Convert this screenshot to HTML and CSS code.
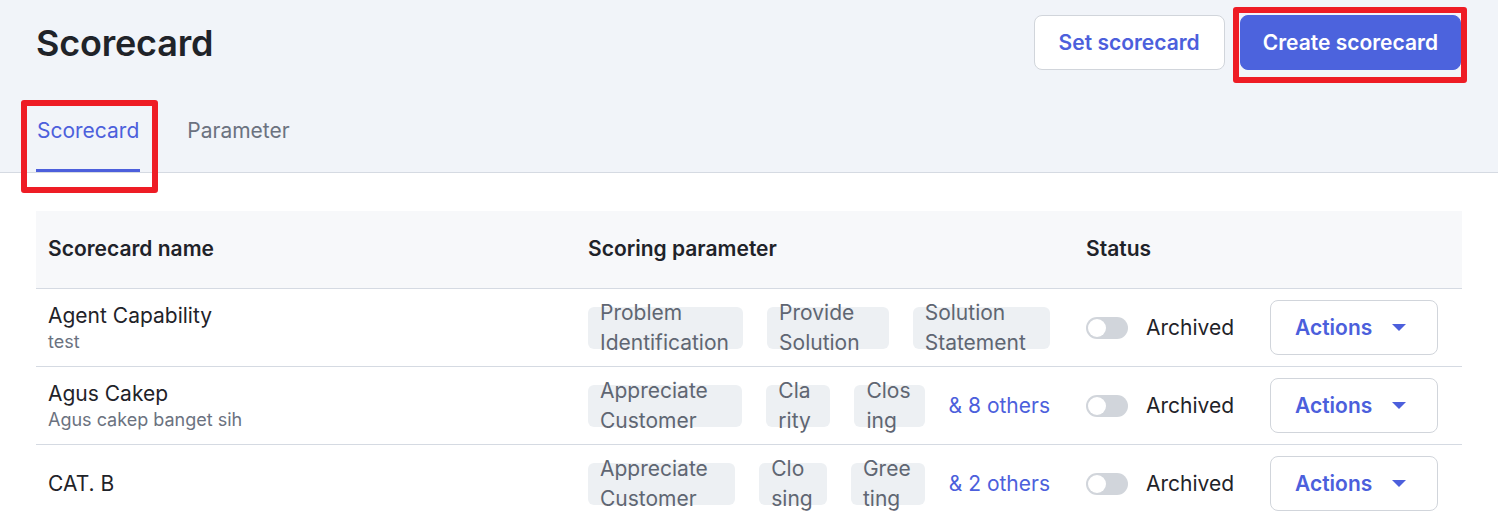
FILE: index.html
```html
<!DOCTYPE html>
<html lang="en">
<head>
<meta charset="utf-8">
<title>Scorecard</title>
<link rel="stylesheet" href="styles.css">
</head>
<body>
<header class="page-head">
  <div class="top-row">
    <h1 class="title">Scorecard</h1>
    <div class="head-actions">
      <button class="btn btn-outline">Set scorecard</button>
      <button class="btn btn-primary">Create scorecard<span class="mark mark-create"></span></button>
    </div>
  </div>
  <nav class="tabs">
    <div class="tab tab-active">Scorecard<span class="mark mark-tab"></span></div>
    <div class="tab">Parameter</div>
  </nav>
</header>

<main class="content">
  <div class="table">
    <div class="row row-head">
      <div class="cell">Scorecard name</div>
      <div class="cell cell-param">Scoring parameter</div>
      <div class="cell">Status</div>
      <div class="cell"></div>
    </div>

    <div class="row">
      <div class="cell cell-name">
        <div class="name">Agent Capability</div>
        <div class="desc">test</div>
      </div>
      <div class="cell cell-param">
        <div class="chips">
          <span class="chip">Problem Identification</span>
          <span class="chip">Provide Solution</span>
          <span class="chip">Solution Statement</span>
        </div>
      </div>
      <div class="cell cell-status">
        <span class="toggle"><span class="knob"></span></span>
        <span class="status-label">Archived</span>
      </div>
      <div class="cell cell-actions">
        <button class="btn-actions">Actions<span class="caret"></span></button>
      </div>
    </div>

    <div class="row">
      <div class="cell cell-name">
        <div class="name">Agus Cakep</div>
        <div class="desc">Agus cakep banget sih</div>
      </div>
      <div class="cell cell-param">
        <div class="chips">
          <span class="chip">Appreciate Customer</span>
          <span class="chip">Clarity</span>
          <span class="chip">Closing</span>
          <span class="more">&amp; 8 others</span>
        </div>
      </div>
      <div class="cell cell-status">
        <span class="toggle"><span class="knob"></span></span>
        <span class="status-label">Archived</span>
      </div>
      <div class="cell cell-actions">
        <button class="btn-actions">Actions<span class="caret"></span></button>
      </div>
    </div>

    <div class="row">
      <div class="cell cell-name">
        <div class="name">CAT. B</div>
      </div>
      <div class="cell cell-param">
        <div class="chips">
          <span class="chip">Appreciate Customer</span>
          <span class="chip">Closing</span>
          <span class="chip">Greeting</span>
          <span class="more">&amp; 2 others</span>
        </div>
      </div>
      <div class="cell cell-status">
        <span class="toggle"><span class="knob"></span></span>
        <span class="status-label">Archived</span>
      </div>
      <div class="cell cell-actions">
        <button class="btn-actions">Actions<span class="caret"></span></button>
      </div>
    </div>
  </div>
</main>
</body>
</html>
```

FILE: styles.css
```css
* { box-sizing: border-box; }

html, body {
  margin: 0;
  padding: 0;
  background: #ffffff;
  font-family: Inter, "Noto Sans", "Liberation Sans", sans-serif;
  color: #1f2937;
  overflow: hidden;
}

.page-head {
  background: #f1f4f9;
  border-bottom: 1px solid #d5dae2;
  padding: 0 36px;
}

.top-row {
  display: flex;
  justify-content: space-between;
  align-items: flex-start;
  padding-top: 15px;
}

.title {
  margin: 0;
  font-size: 36px;
  font-weight: 600;
  line-height: 56px;
  color: #1f2329;
  letter-spacing: -0.2px;
}

.head-actions {
  display: flex;
  gap: 15px;
  margin-right: 1px;
}

.btn {
  position: relative;
  height: 55px;
  padding: 0 24px;
  border-radius: 8px;
  font-family: inherit;
  font-size: 21px;
  font-weight: 600;
  cursor: pointer;
}

.btn-outline {
  background: #ffffff;
  border: 1px solid #d1d5db;
  color: #4c5fdc;
}

.btn-primary {
  background: #4c63dd;
  border: 1px solid #4c63dd;
  color: #ffffff;
  padding: 0 22px;
}

.mark {
  position: absolute;
  border: 6px solid #ee1c25;
  border-radius: 3px;
  pointer-events: none;
}

.mark-create {
  left: -8px;
  top: -9px;
  right: -7px;
  bottom: -14px;
}

.tabs {
  display: flex;
  gap: 46px;
  margin-top: 20px;
}

.tab {
  position: relative;
  padding: 26px 1px 24px;
  font-size: 21px;
  line-height: 28px;
  color: #6b7280;
  border-bottom: 3px solid transparent;
}

.tab-active {
  color: #4c5fdc;
  border-bottom-color: #4c5fdc;
}

.mark-tab {
  left: -15px;
  top: 9px;
  right: -18px;
  bottom: -24px;
}

.content {
  padding: 38px 36px 0;
}

.table {
  display: flex;
  flex-direction: column;
}

.row {
  display: grid;
  grid-template-columns: 540px 498px 184px 1fr;
  align-items: center;
  height: 78px;
  border-bottom: 1px solid #d5dae2;
}

.row-head {
  background: #f7f8fa;
  font-size: 21px;
  font-weight: 600;
  color: #1f2329;
  padding-bottom: 2px;
}

.cell {
  padding: 0 12px;
  min-width: 0;
}

.cell-param {
  padding-right: 24px;
}

.name {
  font-size: 21px;
  line-height: 28px;
  color: #1f2329;
}

.desc {
  font-size: 18px;
  line-height: 24px;
  color: #6b7280;
}

.chips {
  display: flex;
  align-items: center;
  gap: 24px;
  width: 100%;
}

.chip {
  flex: 0 1 auto;
  min-width: 0;
  display: flex;
  align-items: center;
  height: 42px;
  padding: 0 12px;
  border-radius: 6px;
  background: #edf0f3;
  color: #5f6672;
  font-size: 21px;
  line-height: 30px;
  overflow-wrap: anywhere;
}

.more {
  flex: 0 0 auto;
  font-size: 21px;
  color: #4c5fdc;
  white-space: nowrap;
}

.cell-status {
  display: flex;
  align-items: center;
  gap: 18px;
}

.toggle {
  display: inline-flex;
  align-items: center;
  width: 42px;
  height: 22px;
  border-radius: 11px;
  background: #d1d5db;
  padding: 0 2px;
}

.knob {
  width: 18px;
  height: 18px;
  border-radius: 50%;
  background: #ffffff;
}

.status-label {
  font-size: 21px;
  color: #1f2329;
}

.btn-actions {
  display: flex;
  align-items: center;
  gap: 20px;
  width: 168px;
  height: 55px;
  padding: 0 0 0 24px;
  background: #ffffff;
  border: 1px solid #d1d5db;
  border-radius: 8px;
  font-family: inherit;
  font-size: 21px;
  font-weight: 600;
  color: #4c5fdc;
  cursor: pointer;
}

.caret {
  width: 0;
  height: 0;
  border-left: 7px solid transparent;
  border-right: 7px solid transparent;
  border-top: 7px solid #4c5fdc;
}
```
